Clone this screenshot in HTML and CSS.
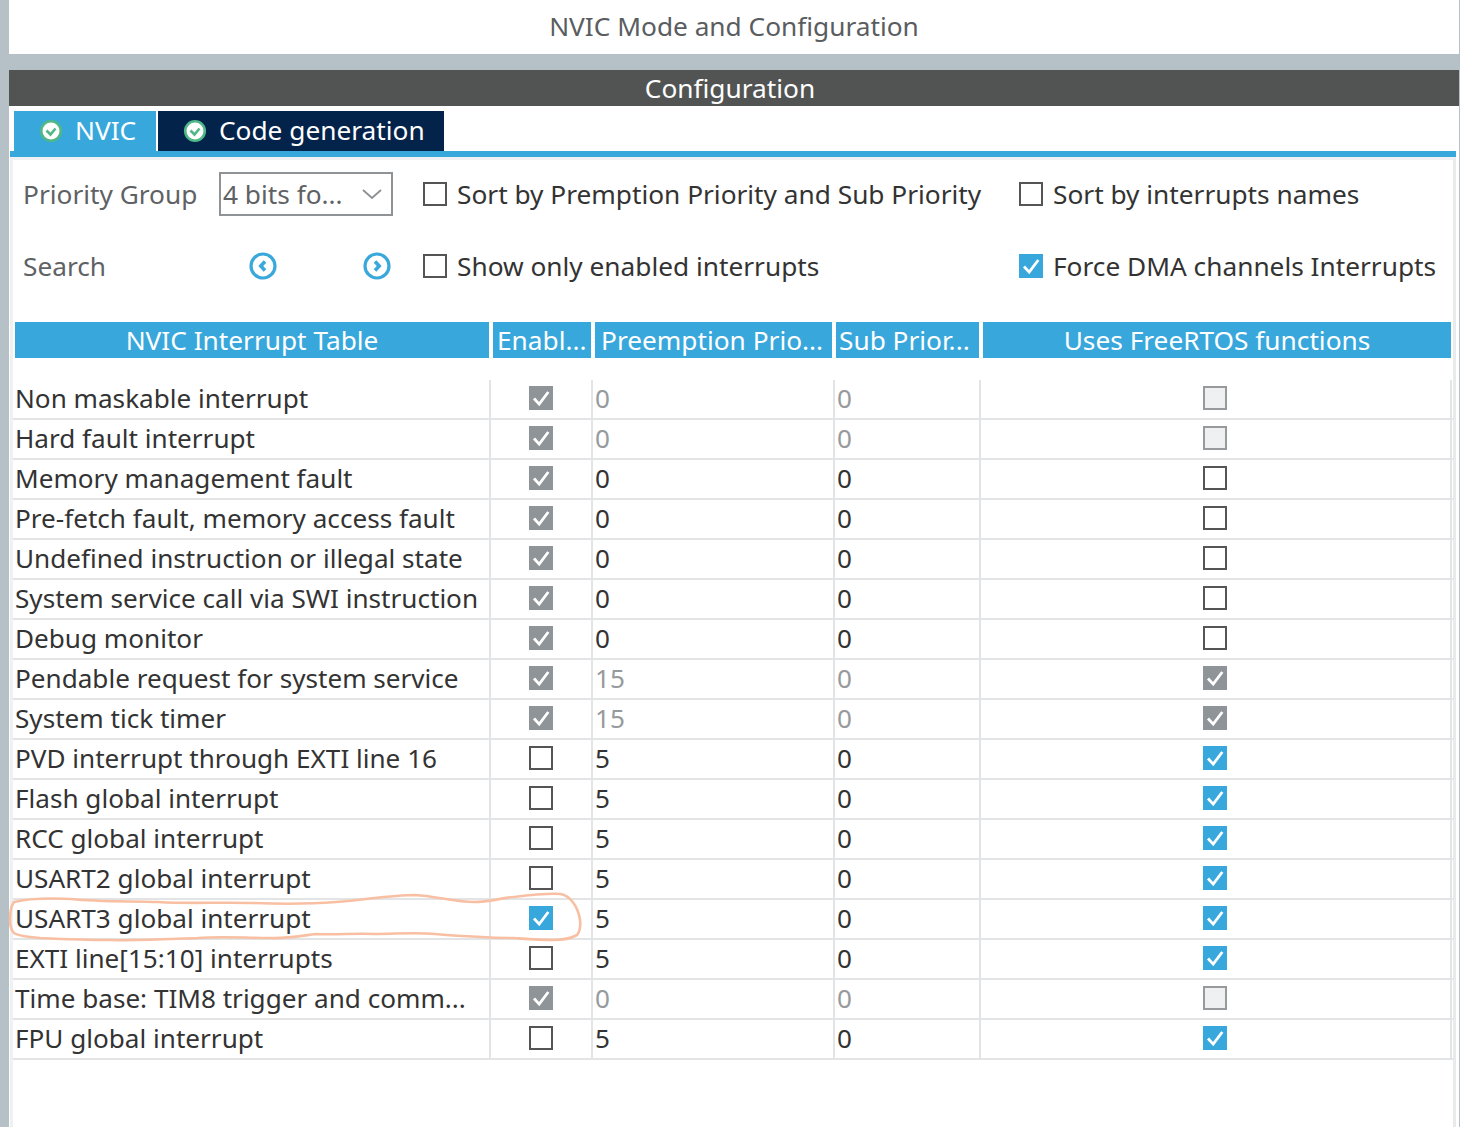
FILE: index.html
```html
<!DOCTYPE html>
<html>
<head>
  <title>NVIC Mode and Configuration</title>
  <meta name="viewport" content="width=device-width, initial-scale=1.0">
  <link rel="stylesheet" href="styles.css">
</head>
<body>
  <svg width="0" height="0" class="defs">
    <symbol id="tick" viewBox="0 0 24 24">
      <path d="M5 12.5l5.2 5.6L19.3 6" fill="none" stroke="#fff" stroke-width="2.8"/>
    </symbol>
    <symbol id="ok" viewBox="0 0 24 24">
      <circle cx="12" cy="12" r="9.8" fill="#fff" stroke="#4fb886" stroke-width="2.6"/>
      <path d="M7.5 11.5l4 4 5-6" fill="none" stroke="#4fb886" stroke-width="2.6"/>
    </symbol>
  </svg>

  <div class="window">
    <div class="title">NVIC Mode and Configuration</div>
    <div class="config-bar">Configuration</div>

    <div class="panel">
      <div class="tabs">
        <div class="tab tab-active"><svg class="tab-icon"><use href="#ok"/></svg>NVIC</div>
        <div class="tab tab-dark"><svg class="tab-icon"><use href="#ok"/></svg>Code generation</div>
      </div>

      <div class="content">
        <div class="options">
          <div class="opt-label">Priority Group</div>
          <div class="select">4 bits fo...
            <svg class="select-arrow" viewBox="0 0 20 10"><path d="M1 1l9 8 9-8" fill="none" stroke="#8b9094" stroke-width="1.8"/></svg>
          </div>
          <label class="check-label"><span class="box"></span>Sort by Premption Priority and Sub Priority</label>
          <label class="check-label"><span class="box"></span>Sort by interrupts names</label>

          <div class="opt-label">Search</div>
          <div class="search-nav">
            <svg class="nav-icon" viewBox="0 0 28 28"><circle cx="14" cy="14" r="12" fill="#fff" stroke="#3ba8dc" stroke-width="3.2"/><path d="M16 9.5l-4.2 4.5 4.2 4.5" fill="none" stroke="#3ba8dc" stroke-width="3.6"/></svg>
            <svg class="nav-icon" viewBox="0 0 28 28"><circle cx="14" cy="14" r="12" fill="#fff" stroke="#3ba8dc" stroke-width="3.2"/><path d="M12 9.5l4.2 4.5-4.2 4.5" fill="none" stroke="#3ba8dc" stroke-width="3.6"/></svg>
          </div>
          <label class="check-label"><span class="box"></span>Show only enabled interrupts</label>
          <label class="check-label"><span class="box box-on"><svg><use href="#tick"/></svg></span>Force DMA channels Interrupts</label>
        </div>

        <div class="table-head">
          <div class="th">NVIC Interrupt Table</div>
          <div class="th th-left th-enable">Enabl...</div>
          <div class="th th-left">Preemption Prio...</div>
          <div class="th th-left th-sub">Sub Prior...</div>
          <div class="th">Uses FreeRTOS functions</div>
        </div>

        <div class="table-body">
          <div class="row"><div class="cell">Non maskable interrupt</div><div class="cell cell-box"><span class="box box-gray"><svg><use href="#tick"/></svg></span></div><div class="cell num off">0</div><div class="cell num off">0</div><div class="cell cell-box"><span class="box box-off"></span></div></div>
          <div class="row"><div class="cell">Hard fault interrupt</div><div class="cell cell-box"><span class="box box-gray"><svg><use href="#tick"/></svg></span></div><div class="cell num off">0</div><div class="cell num off">0</div><div class="cell cell-box"><span class="box box-off"></span></div></div>
          <div class="row"><div class="cell">Memory management fault</div><div class="cell cell-box"><span class="box box-gray"><svg><use href="#tick"/></svg></span></div><div class="cell num">0</div><div class="cell num">0</div><div class="cell cell-box"><span class="box"></span></div></div>
          <div class="row"><div class="cell">Pre-fetch fault, memory access fault</div><div class="cell cell-box"><span class="box box-gray"><svg><use href="#tick"/></svg></span></div><div class="cell num">0</div><div class="cell num">0</div><div class="cell cell-box"><span class="box"></span></div></div>
          <div class="row"><div class="cell">Undefined instruction or illegal state</div><div class="cell cell-box"><span class="box box-gray"><svg><use href="#tick"/></svg></span></div><div class="cell num">0</div><div class="cell num">0</div><div class="cell cell-box"><span class="box"></span></div></div>
          <div class="row"><div class="cell">System service call via SWI instruction</div><div class="cell cell-box"><span class="box box-gray"><svg><use href="#tick"/></svg></span></div><div class="cell num">0</div><div class="cell num">0</div><div class="cell cell-box"><span class="box"></span></div></div>
          <div class="row"><div class="cell">Debug monitor</div><div class="cell cell-box"><span class="box box-gray"><svg><use href="#tick"/></svg></span></div><div class="cell num">0</div><div class="cell num">0</div><div class="cell cell-box"><span class="box"></span></div></div>
          <div class="row"><div class="cell">Pendable request for system service</div><div class="cell cell-box"><span class="box box-gray"><svg><use href="#tick"/></svg></span></div><div class="cell num off">15</div><div class="cell num off">0</div><div class="cell cell-box"><span class="box box-gray"><svg><use href="#tick"/></svg></span></div></div>
          <div class="row"><div class="cell">System tick timer</div><div class="cell cell-box"><span class="box box-gray"><svg><use href="#tick"/></svg></span></div><div class="cell num off">15</div><div class="cell num off">0</div><div class="cell cell-box"><span class="box box-gray"><svg><use href="#tick"/></svg></span></div></div>
          <div class="row"><div class="cell">PVD interrupt through EXTI line 16</div><div class="cell cell-box"><span class="box"></span></div><div class="cell num">5</div><div class="cell num">0</div><div class="cell cell-box"><span class="box box-on"><svg><use href="#tick"/></svg></span></div></div>
          <div class="row"><div class="cell">Flash global interrupt</div><div class="cell cell-box"><span class="box"></span></div><div class="cell num">5</div><div class="cell num">0</div><div class="cell cell-box"><span class="box box-on"><svg><use href="#tick"/></svg></span></div></div>
          <div class="row"><div class="cell">RCC global interrupt</div><div class="cell cell-box"><span class="box"></span></div><div class="cell num">5</div><div class="cell num">0</div><div class="cell cell-box"><span class="box box-on"><svg><use href="#tick"/></svg></span></div></div>
          <div class="row"><div class="cell">USART2 global interrupt</div><div class="cell cell-box"><span class="box"></span></div><div class="cell num">5</div><div class="cell num">0</div><div class="cell cell-box"><span class="box box-on"><svg><use href="#tick"/></svg></span></div></div>
          <div class="row"><div class="cell">USART3 global interrupt</div><div class="cell cell-box"><span class="box box-on"><svg><use href="#tick"/></svg></span></div><div class="cell num">5</div><div class="cell num">0</div><div class="cell cell-box"><span class="box box-on"><svg><use href="#tick"/></svg></span></div></div>
          <div class="row"><div class="cell">EXTI line[15:10] interrupts</div><div class="cell cell-box"><span class="box"></span></div><div class="cell num">5</div><div class="cell num">0</div><div class="cell cell-box"><span class="box box-on"><svg><use href="#tick"/></svg></span></div></div>
          <div class="row"><div class="cell">Time base: TIM8 trigger and comm...</div><div class="cell cell-box"><span class="box box-gray"><svg><use href="#tick"/></svg></span></div><div class="cell num off">0</div><div class="cell num off">0</div><div class="cell cell-box"><span class="box box-off"></span></div></div>
          <div class="row"><div class="cell">FPU global interrupt</div><div class="cell cell-box"><span class="box"></span></div><div class="cell num">5</div><div class="cell num">0</div><div class="cell cell-box"><span class="box box-on"><svg><use href="#tick"/></svg></span></div></div>
        </div>
      </div>
    </div>
  </div>

  <!-- hand drawn marker round the USART3 row -->
  <svg class="marker" viewBox="0 0 600 70">
    <path d="M14 22C30 18 50 18 71 19C100 22 130 21 158 22C190 24 220 22 253 23C280 24 310 24 336 22C365 20 390 15 415 15C435 16 455 22 474 22C490 22 500 18 514 17C530 15 548 13 561 14C570 16 578 26 580 40C581 47 579 53 577 55C570 59 560 60 553 60C540 60 528 59 514 58C490 58 460 56 435 54C415 52 395 54 375 54C355 53 335 55 316 54C300 56 285 59 269 58C245 58 222 56 198 58C170 59 140 61 111 60C85 60 62 59 40 58C28 57 18 56 14 53C11 50 10 45 10 40C10 32 11 26 14 22Z" fill="none" stroke="#f9bfa3" stroke-width="2.6"/>
  </svg>
</body>
</html>
```

FILE: styles.css
```css
body {
  font-family: "Noto Sans", sans-serif;
  font-size: 26.25px;
  margin: 0;
  height: 1127px;
  overflow: hidden;
  background: #fff;
  color: #333;
}

.defs {
  display: block;
  height: 0;
}

.window {
  height: 1127px;
  padding: 0 1px 0 9px;
  box-sizing: border-box;
  background: #b6c1c7;
  display: flex;
  flex-direction: column;
}

.title {
  height: 54px;
  line-height: 52px;
  background: #fff;
  text-align: center;
  color: #5a5d60;
  flex: none;
}

.config-bar {
  margin-top: 16px;
  height: 36px;
  line-height: 37px;
  background: #525453;
  color: #fff;
  text-align: center;
  padding-right: 8px;
  flex: none;
}

.panel {
  flex: 1;
  background: #fff;
  padding: 5px 3px 0 1px;
  min-height: 0;
  display: flex;
  flex-direction: column;
}

.tabs {
  display: flex;
  gap: 2px;
  height: 40px;
  padding-left: 4px;
  border-bottom: 6px solid #38a8dc;
  flex: none;
}

.tab {
  display: flex;
  align-items: center;
  color: #fff;
  padding: 0 0 2px 25px;
  box-sizing: border-box;
}

.tab-icon {
  width: 24px;
  height: 24px;
  margin: 2px 12px 0 0;
}

.tab-active {
  width: 142px;
  background: #38a8dc;
}

.tab-dark {
  width: 286px;
  background: #03234b;
}

.content {
  flex: 1;
  border-top: 3px solid #eef0f2;
  border-left: 3px solid #eef0f2;
  border-right: 3px solid #e8eaec;
}

.options {
  display: grid;
  grid-template-columns: 196px 204px 596px 1fr;
  grid-template-rows: 68px 68px;
  row-gap: 4px;
  align-items: center;
  padding-left: 10px;
  margin-bottom: 22px;
}

.opt-label {
  color: #5f6264;
}

.select {
  width: 174px;
  height: 44px;
  box-sizing: border-box;
  border: 2px solid #8f9396;
  color: #5f6264;
  padding: 0 9px 0 2px;
  display: flex;
  align-items: center;
  justify-content: space-between;
}

.select-arrow {
  width: 20px;
  height: 10px;
}

.search-nav {
  display: flex;
  gap: 86px;
  padding-left: 30px;
}

.nav-icon {
  width: 28px;
  height: 28px;
}

.check-label {
  display: flex;
  align-items: center;
  gap: 10px;
  white-space: nowrap;
}

.box {
  display: block;
  width: 24px;
  height: 24px;
  box-sizing: border-box;
  border: 2px solid #555;
  flex: none;
  background: #fff;
}

.box svg {
  display: block;
  width: 24px;
  height: 24px;
}

.box-on,
.box-gray {
  border: none;
  background: #38a8dc;
}

.box-gray {
  background: #8f9499;
}

.box-off {
  border-color: #979a9d;
  background: #eef0f2;
}

.table-head {
  display: grid;
  grid-template-columns: 474px 98px 237px 143px 468px;
  column-gap: 4px;
  height: 36px;
  padding-left: 2px;
}

.th {
  background: #38a8dc;
  color: #fff;
  line-height: 37px;
  text-align: center;
  white-space: nowrap;
  overflow: hidden;
}

.th-left {
  text-align: left;
  padding-left: 6px;
}

.th-enable {
  padding-left: 4px;
}

.th-sub {
  padding-left: 3px;
}

.table-body {
  margin-top: 22px;
  font-size: 26.12px;
}

.row {
  display: grid;
  grid-template-columns: 478px 102px 242px 146px 471px;
  height: 40px;
  box-sizing: border-box;
  border-bottom: 2px solid #e2e4e6;
}

.cell {
  border-right: 2px solid #e2e4e6;
  line-height: 36px;
  padding-left: 2px;
  white-space: nowrap;
  overflow: hidden;
}

.cell-box {
  display: flex;
  align-items: center;
  justify-content: center;
  padding-left: 0;
  padding-bottom: 2px;
}

.cell:last-child {
  padding-right: 1px;
}

.off {
  color: #969a9d;
}

.marker {
  position: absolute;
  left: 0;
  top: 880px;
  width: 600px;
  height: 70px;
  pointer-events: none;
}
```
